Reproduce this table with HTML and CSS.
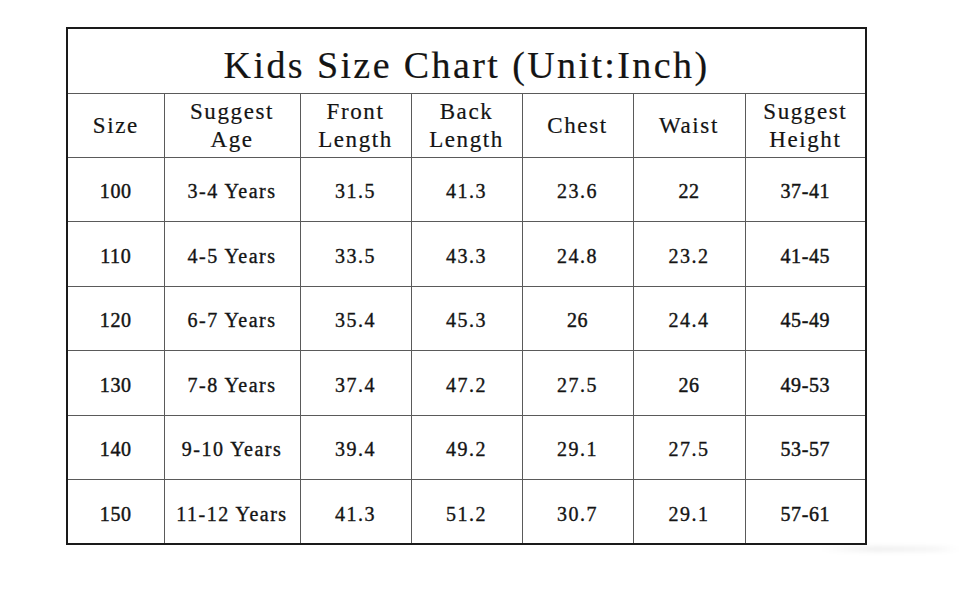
FILE: index.html
```html
<!DOCTYPE html>
<html>
<head>
<meta charset="utf-8">
<link rel="stylesheet" href="styles.css">
</head>
<body>
<div class="page">
  <table class="chart">
    <colgroup>
      <col class="c1"><col class="c2"><col class="c3"><col class="c4"><col class="c5"><col class="c6"><col class="c7">
    </colgroup>
    <tr class="title-row"><th colspan="7" class="title">Kids Size Chart (Unit:Inch)</th></tr>
    <tr class="head-row">
      <th class="hd">Size</th>
      <th class="hd">Suggest<br>Age</th>
      <th class="hd">Front<br>Length</th>
      <th class="hd">Back<br>Length</th>
      <th class="hd">Chest</th>
      <th class="hd">Waist</th>
      <th class="hd">Suggest<br>Height</th>
    </tr>
    <tr class="row"><td class="s">100</td><td>3-4 Years</td><td>31.5</td><td>41.3</td><td>23.6</td><td class="s">22</td><td class="s">37-41</td></tr>
    <tr class="row"><td class="s">110</td><td>4-5 Years</td><td>33.5</td><td>43.3</td><td>24.8</td><td>23.2</td><td class="s">41-45</td></tr>
    <tr class="row"><td class="s">120</td><td>6-7 Years</td><td>35.4</td><td>45.3</td><td class="s">26</td><td>24.4</td><td class="s">45-49</td></tr>
    <tr class="row"><td class="s">130</td><td>7-8 Years</td><td>37.4</td><td>47.2</td><td>27.5</td><td class="s">26</td><td class="s">49-53</td></tr>
    <tr class="row"><td class="s">140</td><td>9-10 Years</td><td>39.4</td><td>49.2</td><td>29.1</td><td>27.5</td><td class="s">53-57</td></tr>
    <tr class="row"><td class="s">150</td><td>11-12 Years</td><td>41.3</td><td>51.2</td><td>30.7</td><td>29.1</td><td class="s">57-61</td></tr>
  </table>
  <div class="shadow"></div>
</div>
</body>
</html>
```

FILE: styles.css
```css
html, body {
  margin: 0;
  padding: 0;
  background: #ffffff;
}
.page {
  position: relative;
  width: 970px;
  height: 600px;
  padding: 27px 0 0 66px;
  box-sizing: border-box;
}
.chart {
  border-collapse: collapse;
  table-layout: fixed;
  width: 799px;
  border: 2px solid #1a1a1a;
  color: #141414;
  position: relative;
  z-index: 1;
  background: #fff;
  font-family: "Liberation Serif", "Times New Roman", serif;
}
.c1 { width: 97px; }
.c2 { width: 136px; }
.c3 { width: 111px; }
.c4 { width: 111px; }
.c5 { width: 111px; }
.c6 { width: 112px; }
.c7 { width: 121px; }
.chart th, .chart td {
  border: 1px solid #5a5a5a;
  padding: 4px 0 0 0;
  text-align: center;
  vertical-align: middle;
  font-weight: normal;
  white-space: nowrap;
  font-size: 20px;
  line-height: 24px;
  letter-spacing: 1.5px;
  -webkit-text-stroke: 0.35px #141414;
}
.title-row { height: 65px; }
.head-row { height: 64px; }
.row { height: 64.5px; }
.chart th.title {
  font-size: 38px;
  line-height: 40px;
  letter-spacing: 2.4px;
  padding-top: 8px;
  -webkit-text-stroke: 0.2px #141414;
}
.chart th.hd {
  font-size: 23px;
  line-height: 28px;
  letter-spacing: 1.6px;
  padding-top: 2px;
  -webkit-text-stroke: 0.2px #141414;
}
.chart td.s {
  letter-spacing: 0.6px;
  -webkit-text-stroke: 0.45px #141414;
}
.shadow {
  position: absolute;
  left: 820px;
  top: 546px;
  width: 140px;
  height: 6px;
  background: linear-gradient(90deg, rgba(0,0,0,0), rgba(0,0,0,0.06) 40%, rgba(0,0,0,0.04) 80%, rgba(0,0,0,0));
  filter: blur(2px);
}
```
